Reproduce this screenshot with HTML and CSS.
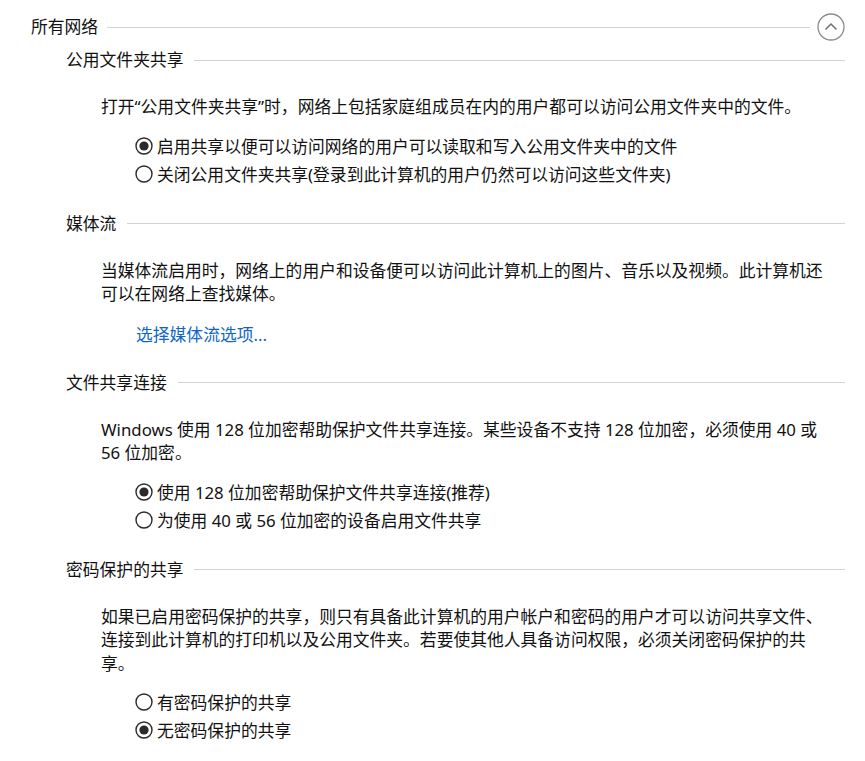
FILE: index.html
```html
<!DOCTYPE html>
<html lang="zh-CN">
<head>
<meta charset="utf-8">
<title>所有网络</title>
<link rel="stylesheet" href="styles.css">
</head>
<body>
<div class="page">
  <div class="group-head">
    <span class="group-title">所有网络</span>
    <span class="rule"></span>
    <span class="collapse">
      <svg width="28" height="28" viewBox="0 0 28 28"><circle cx="14" cy="14" r="13" fill="none" stroke="#8c8c8c" stroke-width="1.3"/><path d="M8.5 16.5 L14 11 L19.5 16.5" fill="none" stroke="#6e6e6e" stroke-width="1.5"/></svg>
    </span>
  </div>

  <section class="section">
    <div class="sec-head"><span class="sec-title">公用文件夹共享</span><span class="rule"></span></div>
    <p class="desc">打开“公用文件夹共享”时，网络上包括家庭组成员在内的用户都可以访问公用文件夹中的文件。</p>
    <div class="radios">
      <label class="radio"><svg class="dot" viewBox="0 0 18 18"><circle cx="9" cy="9" r="8" fill="#fff" stroke="#2b2b2b" stroke-width="1.4"/><circle cx="9" cy="9" r="4.6" fill="#2b2b2b"/></svg><span>启用共享以便可以访问网络的用户可以读取和写入公用文件夹中的文件</span></label>
      <label class="radio"><svg class="dot" viewBox="0 0 18 18"><circle cx="9" cy="9" r="8" fill="#fff" stroke="#2b2b2b" stroke-width="1.4"/></svg><span>关闭公用文件夹共享(登录到此计算机的用户仍然可以访问这些文件夹)</span></label>
    </div>
  </section>

  <section class="section">
    <div class="sec-head"><span class="sec-title">媒体流</span><span class="rule"></span></div>
    <p class="desc">当媒体流启用时，网络上的用户和设备便可以访问此计算机上的图片、音乐以及视频。此计算机还可以在网络上查找媒体。</p>
    <a class="link" href="#">选择媒体流选项...</a>
  </section>

  <section class="section">
    <div class="sec-head"><span class="sec-title">文件共享连接</span><span class="rule"></span></div>
    <p class="desc">Windows 使用 128 位加密帮助保护文件共享连接。某些设备不支持 128 位加密，必须使用 40 或 56 位加密。</p>
    <div class="radios">
      <label class="radio"><svg class="dot" viewBox="0 0 18 18"><circle cx="9" cy="9" r="8" fill="#fff" stroke="#2b2b2b" stroke-width="1.4"/><circle cx="9" cy="9" r="4.6" fill="#2b2b2b"/></svg><span>使用 128 位加密帮助保护文件共享连接(推荐)</span></label>
      <label class="radio"><svg class="dot" viewBox="0 0 18 18"><circle cx="9" cy="9" r="8" fill="#fff" stroke="#2b2b2b" stroke-width="1.4"/></svg><span>为使用 40 或 56 位加密的设备启用文件共享</span></label>
    </div>
  </section>

  <section class="section">
    <div class="sec-head"><span class="sec-title">密码保护的共享</span><span class="rule"></span></div>
    <p class="desc">如果已启用密码保护的共享，则只有具备此计算机的用户帐户和密码的用户才可以访问共享文件、连接到此计算机的打印机以及公用文件夹。若要使其他人具备访问权限，必须关闭密码保护的共享。</p>
    <div class="radios">
      <label class="radio"><svg class="dot" viewBox="0 0 18 18"><circle cx="9" cy="9" r="8" fill="#fff" stroke="#2b2b2b" stroke-width="1.4"/></svg><span>有密码保护的共享</span></label>
      <label class="radio"><svg class="dot" viewBox="0 0 18 18"><circle cx="9" cy="9" r="8" fill="#fff" stroke="#2b2b2b" stroke-width="1.4"/><circle cx="9" cy="9" r="4.6" fill="#2b2b2b"/></svg><span>无密码保护的共享</span></label>
    </div>
  </section>
</div>
</body>
</html>
```

FILE: styles.css
```css
html, body {
  margin: 0;
  padding: 0;
  background: #ffffff;
}

body {
  font-family: "Noto Sans", "Noto Sans CJK SC", sans-serif;
  font-size: 16.8px;
  color: #111111;
}

.page {
  width: 845px;
  padding: 13px 0 0 31px;
  box-sizing: border-box;
}

.group-head {
  display: flex;
  align-items: center;
  height: 28px;
}

.group-title {
  line-height: 24px;
  white-space: nowrap;
}

.rule {
  flex: 1;
  height: 1px;
  background: #d3d3d3;
  margin-left: 9px;
}

.collapse {
  display: flex;
  margin-left: 7px;
  width: 28px;
  height: 28px;
}

.section {
  padding-left: 35px;
  margin-top: 24px;
}

.group-head + .section {
  margin-top: 7px;
}

.sec-head {
  display: flex;
  align-items: center;
  height: 24px;
}

.sec-title {
  line-height: 24px;
  white-space: nowrap;
}

.sec-head .rule {
  margin-left: 11px;
}

.desc {
  margin: 23px 0 0 35px;
  width: 735px;
  line-height: 23.5px;
}

.radios {
  margin: 13px 0 0 69px;
  display: flex;
  flex-direction: column;
}

.radio {
  display: flex;
  align-items: center;
  height: 28px;
  gap: 4px;
  white-space: nowrap;
}

.dot {
  flex: none;
  width: 18px;
  height: 18px;
}

.link {
  display: block;
  margin: 17px 0 0 70px;
  line-height: 24px;
  color: #0f66c9;
  text-decoration: none;
}
```
